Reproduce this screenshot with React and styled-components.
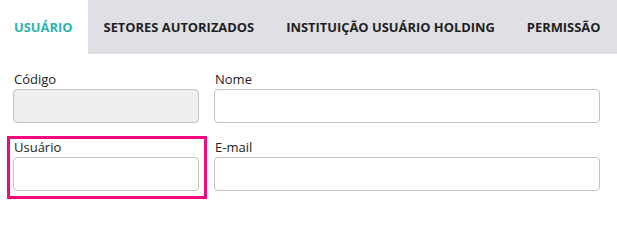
import React from "react";
import styled, { createGlobalStyle } from "styled-components";

const Global = createGlobalStyle`
  html, body { margin: 0; padding: 0; background: #ffffff; }
  body { font-family: "Open Sans", "Liberation Sans", sans-serif; color: #222; min-height: 207px; }
  * { box-sizing: border-box; }
`;

const TabBar = styled.div`
  display: flex;
  height: 54px;
  background: #dfe0e5;
`;

const Tab = styled.div`
  display: flex;
  align-items: center;
  padding: 0 ${(p) => (p.$first ? "15px" : "16px")} 0 ${(p) => (p.$first ? "14px" : "16px")};
  font-size: 12.9px;
  font-weight: 700;
  color: ${(p) => (p.$active ? "#2bb5ae" : "#1f1f1f")};
  background: ${(p) => (p.$active ? "#ffffff" : "transparent")};
  white-space: nowrap;
`;

const Form = styled.div`
  display: grid;
  grid-template-columns: 186px 1fr;
  column-gap: 15px;
  row-gap: 15px;
  padding: 16px 17px 16px 13px;
`;

const Field = styled.div`
  position: relative;
  display: flex;
  flex-direction: column;
  gap: 1px;
  ${(p) =>
    p.$highlight &&
    `
    &::after {
      content: "";
      position: absolute;
      top: -2px;
      left: -6px;
      right: -8px;
      bottom: -8px;
      border: 3px solid #f5077f;
      pointer-events: none;
    }
  `}
`;

const Label = styled.label`
  font-size: 13px;
  line-height: 18px;
  color: #222;
  padding-left: 1px;
`;

const Input = styled.input`
  height: 34px;
  width: 100%;
  border: 1px solid #c3c3c3;
  border-radius: 4px;
  background: ${(p) => (p.disabled ? "#eeeeee" : "#ffffff")};
  font-family: inherit;
  font-size: 13px;
  padding: 0 8px;
  outline: none;
`;

const tabs = ["USUÁRIO", "SETORES AUTORIZADOS", "INSTITUIÇÃO USUÁRIO HOLDING", "PERMISSÃO"];

export default function App() {
  return (
    <>
      <Global />
      <TabBar>
        {tabs.map((t, i) => (
          <Tab key={t} $active={i === 0} $first={i === 0}>
            {t}
          </Tab>
        ))}
      </TabBar>
      <Form>
        <Field>
          <Label>Código</Label>
          <Input disabled />
        </Field>
        <Field>
          <Label>Nome</Label>
          <Input />
        </Field>
        <Field $highlight>
          <Label>Usuário</Label>
          <Input />
        </Field>
        <Field>
          <Label>E-mail</Label>
          <Input />
        </Field>
      </Form>
    </>
  );
}
